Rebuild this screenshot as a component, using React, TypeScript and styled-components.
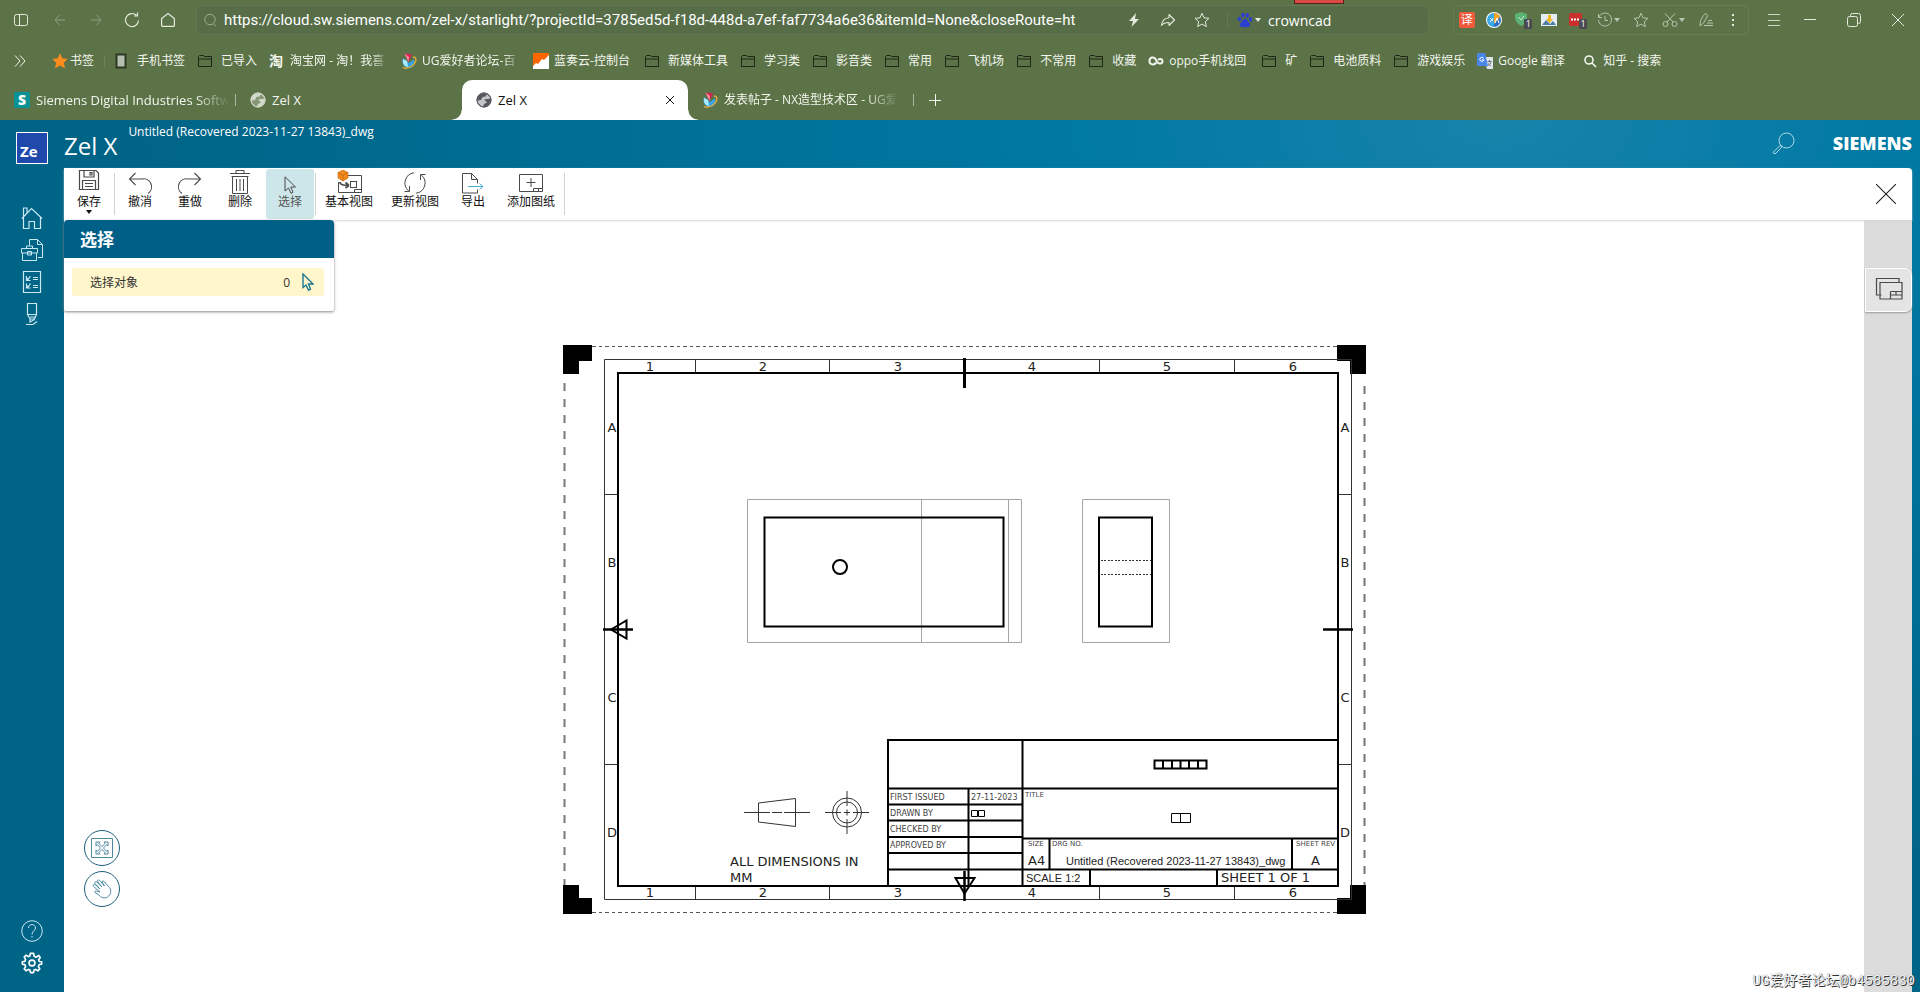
import React from 'react';
import styled, { createGlobalStyle, css } from 'styled-components';

const GlobalStyle = createGlobalStyle`
  *, *::before, *::after { box-sizing: border-box; }
  body {
    margin: 0;
    font-family: 'Open Sans', 'Noto Sans CJK SC', sans-serif;
    font-size: 12px;
  }
  button, input { font: inherit; }
  button { border: 0; padding: 0; background: none; color: inherit; cursor: pointer; }
  svg { display: block; flex: none; }
  a { color: inherit; text-decoration: none; }
`;

/* ---------- shared icon wrapper ---------- */

type IconProps = { w?: number; h?: number; sw?: number; box?: string; children: React.ReactNode };
const Icon = ({ w = 16, h = w, sw = 1, box, children }: IconProps) => (
  <svg width={w} height={h} viewBox={box ?? `0 0 ${w} ${h}`} fill="none" stroke="currentColor" strokeWidth={sw} aria-hidden="true">
    {children}
  </svg>
);

const starPath = 'M8 1.2 10 5.8 15 6.3 11.3 9.7 12.4 14.6 8 12.1 3.6 14.6 4.7 9.7 1 6.3 6 5.8Z';

const GlobeIcon = () => (
  <Icon>
    <circle cx="8" cy="8" r="7" fill="currentColor" fillOpacity=".35" />
    <path d="M3 3.500C5 1.500 9 1 11 2L9.500 4.500 6.500 5 5 8 2 8.500 1.300 6Z M8 7.500 14.500 6.500C15.500 11 11 15.500 7 14.800L8 12 11 10.500Z" fill="currentColor" stroke="none" />
    <circle cx="8" cy="8" r="7" />
  </Icon>
);

const ForumIcon = () => (
  <Icon>
    <path d="M2 5C0 11 4 15 8 15S14 12 13 6L8 10Z" fill="#35a5e6" stroke="none" />
    <path d="M2 6C1 12 5 14 7 14L6 8Z" fill="#a9ecff" stroke="none" />
    <path d="M3.500 .5 11 1.500 7.500 9Z" fill="#d4234d" stroke="none" />
    <path d="M3.500 .5 8 4 7.500 9Z" fill="#ff8ba5" stroke="none" />
    <path d="M12 4C16 4 16 9 11 13 7 15.500 3 16 2 14" stroke="#e0ac3c" strokeWidth="1.4" />
  </Icon>
);

const FolderIcon = () => (
  <Icon>
    <path d="M1.500 3.500 2.500 2.500H6.500L7.500 3.500H14.500V13.500H1.500ZM1.500 6H14.500" stroke="#1d2617" />
  </Icon>
);

/* ---------- browser chrome ---------- */

const Chrome = styled.header`
  background: #5c7348;
  color: #f3f6ee;
  overflow: hidden;
`;

const AddressRow = styled.div`
  position: relative;
  display: flex;
  align-items: center;
  height: 40px;
`;

const NavButton = styled.button<{ $dim?: boolean; $width?: number }>`
  display: flex;
  align-items: center;
  justify-content: center;
  width: ${(p) => p.$width ?? 36}px;
  height: 30px;
  color: ${(p) => (p.$dim ? '#8d9f7e' : '#e4eadd')};
`;

const AddressField = styled.div`
  display: flex;
  align-items: center;
  flex: 1;
  height: 30px;
  margin-left: 10px;
  padding-left: 5px;
  border: 1px solid #637a50;
  border-radius: 6px;
  background: #566d47;
`;

const UrlInput = styled.input`
  flex: 1;
  min-width: 0;
  margin-left: 6px;
  padding: 0;
  border: 0;
  outline: 0;
  background: none;
  color: #fff;
  font-family: Roboto, 'Noto Sans CJK SC', sans-serif;
  font-size: 15px;
`;

const SearchInput = styled(UrlInput)`
  flex: none;
  width: 160px;
  margin-left: 2px;
  font-family: 'Open Sans', 'Noto Sans CJK SC', sans-serif;
  font-size: 14px;
`;

const FieldIcon = styled.span`
  display: flex;
  align-items: center;
  justify-content: center;
  width: 16px;
`;

const FieldButton = styled.button`
  display: flex;
  align-items: center;
  justify-content: center;
  gap: 2px;
  width: 34px;
  height: 28px;
  color: #e4eadd;
`;

const FieldDivider = styled.span`
  width: 1px;
  height: 16px;
  margin: 0 4px 0 8px;
  background: #647a54;
`;

const RecordMark = styled.span`
  position: absolute;
  top: 0;
  left: 1294px;
  width: 50px;
  height: 4px;
  border: 1px solid #5a1f1c;
  border-top: 0;
  background: #d84a44;
`;

const ExtensionBox = styled.div`
  display: flex;
  align-items: center;
  width: 296px;
  height: 30px;
  margin-left: 24px;
  border: 1px solid #687f55;
  border-radius: 6px;
  color: #b9c5ad;
`;

const ExtensionButton = styled.button<{ $width?: number }>`
  position: relative;
  display: flex;
  align-items: center;
  justify-content: center;
  gap: 1px;
  width: ${(p) => p.$width ?? 28}px;
  height: 28px;
  padding-right: 2px;
`;

const TranslateChip = styled.span`
  width: 16px;
  height: 16px;
  border-radius: 2px;
  background: #ef5a3d;
  color: #fff;
  font-size: 12px;
  line-height: 16px;
`;

const CountBadge = styled.span`
  position: absolute;
  right: 4px;
  bottom: 5px;
  width: 8px;
  height: 10px;
  border-radius: 1px;
  background: #4a4a50;
  color: #fff;
  font-size: 9px;
  line-height: 10px;
`;

const WindowControls = styled.div`
  display: flex;
  padding-left: 11px;
`;

const BookmarkRow = styled.nav`
  display: flex;
  align-items: center;
  gap: 12px;
  height: 40px;
  padding: 1px 0 0 10px;
  white-space: nowrap;
`;

const MoreBookmarks = styled.button`
  display: flex;
  justify-content: center;
  width: 20px;
  margin-right: 10px;
`;

const RowDivider = styled.span`
  width: 1px;
  height: 12px;
  margin: 0 -4px 0 -2px;
  background: #6f8360;
`;

const fade = css`
  -webkit-mask-image: linear-gradient(to right, #000 82%, transparent);
  mask-image: linear-gradient(to right, #000 82%, transparent);
`;

const BookmarkLink = styled.a<{ $gap?: number }>`
  display: flex;
  align-items: center;
  flex: none;
  gap: ${(p) => p.$gap ?? 8}px;
`;

const BookmarkText = styled.span<{ $width?: number; $fade?: boolean }>`
  width: ${(p) => (p.$width ? `${p.$width}px` : 'auto')};
  line-height: 20px;
  ${(p) => p.$fade && fade}
`;

const TaobaoGlyph = styled.span`
  width: 16px;
  font-size: 14px;
  font-weight: 700;
  line-height: 16px;
`;

const TabRow = styled.div`
  display: flex;
  height: 40px;
  padding-left: 10px;
`;

const Tab = styled.div<{ $active?: boolean; $divided?: boolean; $indent?: boolean }>`
  position: relative;
  display: flex;
  align-items: center;
  width: 226px;
  height: 40px;
  padding: 0 ${(p) => (p.$active ? 10 : 12)}px 0 ${(p) => (p.$active || p.$indent ? 14 : 4)}px;
  ${(p) => p.$divided && css`
    &::after {
      content: '';
      position: absolute;
      right: 0;
      top: 14px;
      width: 1px;
      height: 12px;
      background: #a9b79c;
    }
  `}
  ${(p) => p.$active && css`
    background: #fff;
    color: #111;
    border-radius: 10px 10px 0 0;
    &::before, &::after {
      content: '';
      position: absolute;
      bottom: 0;
      width: 10px;
      height: 10px;
    }
    &::before { left: -10px; background: radial-gradient(circle at 0 0, transparent 9px, #fff 10px); }
    &::after { right: -10px; background: radial-gradient(circle at 100% 0, transparent 9px, #fff 10px); }
  `}
`;

const TabMain = styled.button<{ $dark?: boolean; $small?: boolean }>`
  display: flex;
  align-items: center;
  gap: 6px;
  flex: 1;
  min-width: 0;
  font-size: ${(p) => (p.$small ? 12 : 13)}px;
  line-height: 20px;
  text-align: left;
  white-space: nowrap;
  svg { color: ${(p) => (p.$dark ? '#55585c' : '#d3dacb')}; }
`;

const TabText = styled.span<{ $fade?: boolean }>`
  ${(p) => p.$fade && fade}
`;

const TabAction = styled.button`
  display: flex;
  align-items: center;
  justify-content: center;
  width: 16px;
`;

const NewTab = styled(TabAction)`
  width: 42px;
`;

const SiteLogo = styled.span`
  flex: none;
  width: 16px;
  height: 16px;
  background: #0a9396;
  color: #fff;
  font-size: 14px;
  font-weight: 800;
  line-height: 16px;
  text-align: center;
`;

type Bookmark = { text: string; icon?: React.ReactNode; width?: number; fade?: boolean; gap?: number };

const bookmarks: Bookmark[] = [
  { text: '手机书签', icon: <Icon><rect x="3.500" y="1.500" width="9" height="13" fill="#b4bfae" stroke="#2c3825" strokeWidth="2" /></Icon> },
  { text: '已导入' },
  { text: '淘宝网 - 淘！我喜', icon: <TaobaoGlyph>淘</TaobaoGlyph>, width: 99, fade: true, gap: 5 },
  { text: 'UG爱好者论坛-百', icon: <ForumIcon />, width: 99, fade: true, gap: 5 },
  {
    text: '蓝奏云-控制台', width: 78, gap: 5,
    icon: <Icon><path d="M0 0H16V16H0Z" fill="#fff" stroke="none" /><path d="M0 0H16V2L11 7 9 6 5 11 3 10 0 13Z" fill="#f60" stroke="none" /></Icon>,
  },
  { text: '新媒体工具' }, { text: '学习类' }, { text: '影音类' }, { text: '常用' },
  { text: '飞机场' }, { text: '不常用' }, { text: '收藏' },
  {
    text: 'oppo手机找回', width: 80, gap: 5,
    icon: <Icon sw={2}><path d="M8 9.500C6.500 12.500 1.500 12 1.500 8S6 3.500 7.500 6L9 8.800C10.500 11.500 14.500 11 14.500 8.300S11.500 5.500 10 7" /></Icon>,
  },
  { text: '矿' }, { text: '电池质料' }, { text: '游戏娱乐' },
  {
    text: 'Google 翻译', width: 72, gap: 5,
    icon: (
      <Icon>
        <path d="M7 4H16V16H10Z" fill="#dfe3ea" stroke="none" />
        <path d="M10.500 8.500H14.500M12.500 7V8.500M14 8.500C13.500 11 12 12 10.500 13M11 10.500 14 13" stroke="#6b7280" />
        <path d="M0 0H8L11 13H0Z" fill="#4a86e8" stroke="none" />
        <path d="M6.500 5.200A2 2 0 1 0 6.800 6.800H5" stroke="#fff" />
      </Icon>
    ),
  },
  { text: '知乎 - 搜索', gap: 5, icon: <Icon sw={1.6}><circle cx="7" cy="7" r="4" /><path d="m10 10 4 4" /></Icon> },
];

const Caret = () => <Icon w={6} h={4}><path d="M0 0H6L3 4Z" fill="currentColor" stroke="none" /></Icon>;

const BrowserChrome = () => (
  <Chrome>
    <AddressRow>
      <NavButton aria-label="侧栏" $width={42}><Icon><rect x="1.500" y="2.500" width="13" height="11" rx="2" /><path d="M6.500 2.500V13.500" /></Icon></NavButton>
      <NavButton aria-label="后退" $dim><Icon><path d="M13 8H3M8 2.500 3 8 8 13.500" /></Icon></NavButton>
      <NavButton aria-label="前进" $dim><Icon><path d="M3 8H13M8 2.500 13 8 8 13.500" /></Icon></NavButton>
      <NavButton aria-label="刷新"><Icon sw={1.2}><path d="M14.500 8.500A6.500 6.500 0 1 1 12.500 3.300M13.500.5V4H10" /></Icon></NavButton>
      <NavButton aria-label="主页"><Icon sw={1.2}><path d="M1.600 6.500 8 1.500 14.400 6.500V13.400A1 1 0 0 1 13.400 14.400H2.600A1 1 0 0 1 1.600 13.400Z" /></Icon></NavButton>
      <AddressField>
        <FieldIcon><Icon w={14}><circle cx="7" cy="6.500" r="5.200" stroke="#9fae92" /><path d="m10.500 11 2.500 2.500" stroke="#9fae92" /></Icon></FieldIcon>
        <UrlInput
          aria-label="地址"
          readOnly
          value="https://cloud.sw.siemens.com/zel-x/starlight/?projectId=3785ed5d-f18d-448d-a7ef-faf7734a6e36&itemId=None&closeRoute=ht"
        />
        <FieldButton aria-label="极速"><Icon><path d="M10 1 3 9H7L5.500 15 13 7H9Z" fill="currentColor" stroke="none" /></Icon></FieldButton>
        <FieldButton aria-label="分享"><Icon sw={1.1}><path d="M9 2.500 14.500 8 9 13.500V10.500C5 10.500 3 11.500 1.500 13.500 2 9 4.500 6 9 5.700Z" strokeLinejoin="round" /></Icon></FieldButton>
        <FieldButton aria-label="收藏"><Icon><path d={starPath} strokeLinejoin="round" /></Icon></FieldButton>
        <FieldDivider />
        <FieldButton aria-label="搜索引擎">
          <Icon>
            <g fill="#2b3fd0" stroke="none">
              <ellipse cx="2.500" cy="7" rx="1.800" ry="2.300" /><ellipse cx="6" cy="3.200" rx="1.700" ry="2.400" />
              <ellipse cx="10.300" cy="3.400" rx="1.700" ry="2.400" /><ellipse cx="13.600" cy="7.400" rx="1.700" ry="2.300" />
              <path d="M8 7C5.500 7 5.500 9.500 3.500 11 1.500 13 3 16 8 15 13 16 14.500 13 12.500 11 10.500 9.500 10.500 7 8 7Z" />
            </g>
          </Icon>
          <Caret />
        </FieldButton>
        <SearchInput aria-label="搜索" readOnly value="crowncad" />
      </AddressField>
      <RecordMark />
      <ExtensionBox>
        <ExtensionButton aria-label="翻译扩展"><TranslateChip>译</TranslateChip></ExtensionButton>
        <ExtensionButton aria-label="词典">
          <Icon>
            <circle cx="8" cy="8" r="8" fill="#fff" stroke="none" />
            <path d="M8 1A7 7 0 0 0 8 15Z" fill="#3aa7e8" stroke="none" /><path d="M8 1A7 7 0 0 1 8 15Z" fill="#2c6fc4" stroke="none" />
            <path d="M8 1A7 7 0 0 1 14 5L8 12Z" fill="#f5a524" stroke="none" />
            <path d="M4 6 7 9M7 6 4 10M9 11 11 6 13 11" stroke="#fff" />
          </Icon>
        </ExtensionButton>
        <ExtensionButton aria-label="防护">
          <Icon><path d="M1 2 7 0 13 2V7C13 11 10 13 7 14 4 12 1 9 1 6Z" fill="#5cb274" stroke="none" /><path d="M4.500 5 7 8 10 4" stroke="#d5f0db" /></Icon>
          <CountBadge>1</CountBadge>
        </ExtensionButton>
        <ExtensionButton aria-label="图片下载">
          <Icon><rect x="0" y="2" width="16" height="12" fill="#e6eef5" stroke="none" /><path d="M1 13 5 8 9 12 12 9 15 13Z" fill="#4f7ea8" stroke="none" /><path d="M7 3H10V7H12L8.500 11 5 7H7Z" fill="#f0b41c" stroke="none" /></Icon>
        </ExtensionButton>
        <ExtensionButton aria-label="密码">
          <Icon><rect x="1" y="1" width="13" height="13" rx="2" fill="#c9302c" stroke="none" /><path d="M3 7.500H12" stroke="#fff" strokeWidth="2" strokeDasharray="2 1" /></Icon>
          <CountBadge>1</CountBadge>
        </ExtensionButton>
        <ExtensionButton aria-label="历史" $width={38}><Icon><path d="M2 5A6.500 6.500 0 1 1 1.500 8M1.500 2V5.500H5M8 4V8.500H11" /></Icon><Caret /></ExtensionButton>
        <ExtensionButton aria-label="收藏夹"><Icon><path d={starPath} strokeLinejoin="round" /></Icon></ExtensionButton>
        <ExtensionButton aria-label="截图" $width={38}><Icon><circle cx="3.500" cy="12" r="2.500" /><circle cx="12.500" cy="12" r="2.500" /><path d="M5 10 13 1.500M11 10 3 1.500" /></Icon><Caret /></ExtensionButton>
        <ExtensionButton aria-label="笔记"><Icon><path d="M2 12.500C2 9 5 3 7 2 9 1.500 10 3 9 5L5.500 11 2 14ZM10 8.500H14M9 11H15M6 13.500H15" /></Icon></ExtensionButton>
        <ExtensionButton aria-label="更多"><Icon><path d="M8 2V4M8 7V9M8 12V14" stroke="#e4eadd" strokeWidth="2" /></Icon></ExtensionButton>
      </ExtensionBox>
      <WindowControls>
        <NavButton aria-label="菜单" $width={28}><Icon><path d="M2 2.500H14M2 8.500H14M2 13.500H14" stroke="#ccd5c4" /></Icon></NavButton>
        <NavButton aria-label="最小化" $width={44}><Icon><path d="M2 7.500H14" /></Icon></NavButton>
        <NavButton aria-label="还原" $width={44}><Icon><rect x="1.500" y="4.500" width="10" height="10" rx="2" /><path d="M4.500 4.500V3.500A2 2 0 0 1 6.500 1.500H12.500A2 2 0 0 1 14.500 3.500V9.500A2 2 0 0 1 12.500 11.500H11.500" /></Icon></NavButton>
        <NavButton aria-label="关闭窗口" $width={44}><Icon><path d="M2 2 14 14M14 2 2 14" /></Icon></NavButton>
      </WindowControls>
    </AddressRow>

    <BookmarkRow>
      <MoreBookmarks aria-label="更多书签"><Icon><path d="M3 2.500 8 8 3 13.500M8 2.500 13 8 8 13.500" /></Icon></MoreBookmarks>
      <BookmarkLink href="#" $gap={2}>
        <Icon><path d={starPath} fill="#fb8c1e" stroke="#fb8c1e" strokeLinejoin="round" /></Icon>
        <BookmarkText>书签</BookmarkText>
      </BookmarkLink>
      <RowDivider />
      {bookmarks.map((b) => (
        <BookmarkLink href="#" key={b.text} $gap={b.gap}>
          {b.icon ?? <FolderIcon />}
          <BookmarkText $width={b.width} $fade={b.fade}>{b.text}</BookmarkText>
        </BookmarkLink>
      ))}
    </BookmarkRow>

    <TabRow>
      <Tab $divided>
        <TabMain><SiteLogo>S</SiteLogo><TabText $fade>Siemens Digital Industries Softw</TabText></TabMain>
      </Tab>
      <Tab $indent>
        <TabMain><GlobeIcon /><TabText>Zel X</TabText></TabMain>
      </Tab>
      <Tab $active>
        <TabMain $dark><GlobeIcon /><TabText>Zel X</TabText></TabMain>
        <TabAction aria-label="关闭标签"><Icon w={10}><path d="m1 1 8 8M9 1 1 9" /></Icon></TabAction>
      </Tab>
      <Tab $divided $indent>
        <TabMain $small><ForumIcon /><TabText $fade>发表帖子 - NX造型技术区 - UG爱</TabText></TabMain>
      </Tab>
      <NewTab aria-label="新标签页"><Icon w={12}><path d="M6.500 0V12M0 6.500H12" /></Icon></NewTab>
    </TabRow>
  </Chrome>
);

/* ---------- application frame ---------- */

const Page = styled.div`
  display: flex;
  flex-direction: column;
  min-height: 100vh;
  position: relative;
`;

const AppFrame = styled.div`
  display: flex;
  flex: 1;
  padding-right: 8px;
  background: radial-gradient(ellipse 72% 90% at 78% 0, #1783ab 0%, #0079a3 30%, #006487 100%);
`;

const Sidebar = styled.nav`
  display: flex;
  flex-direction: column;
  align-items: center;
  width: 64px;
  padding: 12px 0 13px;
  color: #c9e8f2;
`;

const SideButton = styled.button`
  display: flex;
  align-items: center;
  justify-content: center;
  width: 32px;
  height: 32px;
`;

const AppLogo = styled.span`
  display: flex;
  align-items: flex-end;
  width: 32px;
  height: 32px;
  margin-bottom: 38px;
  padding: 0 0 2px 3px;
  border: 1px solid #fff;
  background: #1f49ab;
  color: #fff;
  font-size: 15px;
  font-weight: 700;
  line-height: 20px;
`;

const SideSpacer = styled.span`
  flex: 1;
`;

const Main = styled.main`
  display: flex;
  flex-direction: column;
  flex: 1;
  min-width: 0;
`;

const TitleBar = styled.div`
  display: flex;
  height: 48px;
  color: #fff;
`;

const AppName = styled.h1`
  margin: 8px 11px 0 0;
  font-size: 24px;
  font-weight: 400;
  line-height: 36px;
`;

const DocumentName = styled.span`
  flex: 1;
  margin-top: 3px;
  font-size: 12px;
  line-height: 18px;
`;

const SearchButton = styled.button`
  align-self: flex-start;
  margin: 12px 38px 0 0;
  color: #b5dcea;
`;

const Brand = styled.span`
  margin-top: 11px;
  font-size: 18px;
  font-weight: 800;
  line-height: 24px;
`;

const Toolbar = styled.div`
  position: relative;
  z-index: 1;
  display: flex;
  align-items: flex-start;
  height: 52px;
  border-top-right-radius: 4px;
  background: #fff;
  box-shadow: 0 1px 2px #d5d5d5;
  color: #111;
`;

const ToolButton = styled.button<{ $wide?: boolean; $active?: boolean }>`
  display: flex;
  flex-direction: column;
  align-items: center;
  width: ${(p) => (p.$wide ? 64 : 48)}px;
  height: 50px;
  margin: 1px 1px 0;
  border-radius: 3px;
  line-height: 16px;
  white-space: nowrap;
  background: ${(p) => (p.$active ? '#cde6ea' : 'none')};
  color: ${(p) => (p.$active ? '#555' : 'inherit')};
`;

const ToolGlyph = styled.span<{ $raised?: boolean }>`
  display: flex;
  align-items: flex-end;
  height: 25px;
  padding-bottom: ${(p) => (p.$raised ? 3 : 0)}px;
  color: #4a4a4a;
`;

const ToolDivider = styled.span`
  width: 1px;
  height: 42px;
  margin-top: 5px;
  background: #d2d2d2;
`;

const CloseButton = styled.button`
  margin: 16px 16px 0 auto;
  color: #222;
`;

const Workspace = styled.div`
  display: flex;
  flex: 1;
`;

const Canvas = styled.section`
  position: relative;
  display: flex;
  justify-content: center;
  flex: 1;
  min-width: 0;
  padding: 125px 0 78px;
  background: #fff;
`;

const RightRail = styled.aside`
  width: 48px;
  padding: 48px 0 0 1px;
  background: #dcdcdc;
`;

const RailTab = styled.button`
  display: flex;
  align-items: center;
  justify-content: center;
  width: 47px;
  height: 44px;
  padding-bottom: 3px;
  border: 1px solid #fff;
  border-radius: 0 7px 7px 0;
  background: #e4e4e4;
  box-shadow: 0 1px 2px #999;
  color: #4a4a4a;
`;

const SelectPanel = styled.section`
  position: absolute;
  top: 0;
  left: 0;
  z-index: 2;
  width: 270px;
  padding-bottom: 15px;
  border-radius: 4px 4px 2px 2px;
  background: #fff;
  box-shadow: 0 1px 3px #888;
`;

const PanelTitle = styled.h2`
  margin: 0;
  padding: 1px 16px 0;
  border-radius: 4px 4px 0 0;
  background: #005f87;
  color: #fff;
  font-size: 17px;
  font-weight: 700;
  line-height: 37px;
`;

const SelectRow = styled.button`
  display: flex;
  align-items: center;
  width: 252px;
  height: 28px;
  margin: 10px 8px 0;
  padding: 0 10px 0 18px;
  border-radius: 3px;
  background: #fff6cb;
  color: #333;
`;

const SelectCount = styled.span`
  margin: 0 12px 0 auto;
`;

const ViewControls = styled.div`
  position: absolute;
  bottom: 85px;
  left: 20px;
  display: flex;
  flex-direction: column;
  gap: 5px;
`;

const RoundButton = styled.button`
  display: flex;
  align-items: center;
  justify-content: center;
  width: 36px;
  height: 36px;
  border: 1px solid #1d5f7c;
  border-radius: 50%;
  background: #fff;
  color: #4f8aa2;
`;

const ForumMark = styled.span`
  position: absolute;
  right: 5px;
  bottom: 1px;
  z-index: 3;
  color: #f4f4f4;
  font-family: 'Liberation Mono', 'Noto Sans CJK SC', monospace;
  font-size: 14px;
  line-height: 20px;
  text-shadow: 1px 1px 0 #333, 0 0 1px #777;
`;

/* ---------- toolbar data ---------- */

const tools = {
  save: <Icon w={22} sw={1.2}><path d="M1.500 1.500H18L20.500 4V20.500H1.500Z" /><path d="M6 1.500V8H16V1.500M12 3.500H14V6H12ZM4.500 20V11.500H17.500V20M7 14.500H15M7 17.500H15" /></Icon>,
  undo: <Icon w={24} h={22} sw={1.1}><path d="M7.500 1 1.500 7 7.500 13M1.500 7H14A8 8 0 0 1 20 21.500" /></Icon>,
  redo: <Icon w={24} h={22} sw={1.1}><path d="M16.500 1 22.500 7 16.500 13M22.500 7H10A8 8 0 0 0 4 21.500" /></Icon>,
  trash: <Icon w={22} h={24}><path d="M1 3.500H21M7 3.500V.5H15V3.500M2.500 6.500H19.500M3.500 6.500V23.500H18.500V6.500M7.500 9V21M11 9V21M14.500 9V21" /></Icon>,
  select: <Icon w={14} h={18}><path d="M2 .8V15L5.500 12 8 17.300 10 16.300 7.800 11H12.500Z" /></Icon>,
  base: (
    <Icon w={26} h={24}>
      <path d="M2.500 12V22.500H25.500V5.500H12" /><rect x="14.500" y="11.500" width="6" height="6" /><path d="M18.500 22V19.500H25" />
      <path d="M4 12C4 15 8 15.500 12 15.500M13 15.500 9.500 12.500M13 15.500 9.500 18" strokeWidth="1.800" />
      <path d="M7 0 12 2.500V8L7 11 2 8V2.500Z" fill="#f08a1c" stroke="#c8650a" strokeWidth=".6" /><path d="M2 2.500 7 5.500 12 2.500M7 5.500V11" stroke="#b85a06" strokeWidth=".6" />
    </Icon>
  ),
  refresh: <Icon w={24} h={22}><path d="M11 .8A10.300 10.300 0 0 0 5.500 18.800M6.500 14V19.500H1.500M13 21.200A10.300 10.300 0 0 0 18.500 3.200M17.500 8V2.500H22.500" /></Icon>,
  export: <Icon w={24} h={22}><path d="M16.500 11.500V7.500L10.500 1.500H1.500V21H16.500V17.500M10.500 1.500V7.500H16.500" /><path d="M7 14.500H22M18.500 11.500 22 14.500 18.500 17.500" stroke="#4aabc9" /></Icon>,
  sheet: <Icon w={26} h={22}><path d="M1.500 2.500H24.500V19.500H1.500Z" /><path d="M8.500 10.500H17.500M13 6V15M15.500 19V16.500H24M20.500 16.500V19" /></Icon>,
};

type ToolProps = { icon: React.ReactNode; label: string; wide?: boolean; active?: boolean; menu?: boolean };
const Tool = ({ icon, label, wide, active, menu }: ToolProps) => (
  <ToolButton $wide={wide} $active={active}>
    <ToolGlyph $raised={menu}>{icon}</ToolGlyph>
    <span>{label}</span>
    {menu && <Caret />}
  </ToolButton>
);

/* ---------- drawing sheet ---------- */

const Sheet = styled.svg`
  font-family: 'DejaVu Sans', sans-serif;
  fill: none;
  stroke: #000;
  text { fill: #222; stroke: none; font-size: 13px; }
  text.small { font-size: 8px; fill: #444; }
  text.caption { font-size: 7px; fill: #444; }
  text.file { font-family: 'Liberation Sans', sans-serif; font-size: 11px; }
`;

const columns: [string, number][] = [['1', 650], ['2', 763], ['3', 898], ['4', 1032], ['5', 1167], ['6', 1293]];
const rows: [string, number][] = [['A', 432], ['B', 567], ['C', 702], ['D', 837]];
const approvals = ['FIRST ISSUED', 'DRAWN BY', 'CHECKED BY', 'APPROVED BY'];

const DrawingSheet = () => (
  <Sheet width="804" height="569" viewBox="562 345 804 569" role="img" aria-label="图纸">
    <g stroke="#555">
      <path d="M592 346.500H1337M592 912.500H1337" strokeDasharray="4 3 3 3" />
      <path d="M564.500 383V885M1364.500 386V885" strokeWidth="2" stroke="#777" strokeDasharray="8 8" />
    </g>
    <path
      fill="#000" stroke="none"
      d="M563 345H592V361H579V374H563ZM1337 345H1366V374H1350V361H1337ZM563 885H579V898H592V914H563ZM1350 885H1366V914H1337V898H1350Z"
    />
    <path stroke="#333" d="M604.500 359.500H1351.500V899.500H604.500Z M695.500 360V373M829.500 360V373M1099.500 360V373M1234.500 360V373M695.500 886V899M829.500 886V899M1099.500 886V899M1234.500 886V899M605 494.500H618M605 764.500H618M1338 494.500H1351M1338 764.500H1351" />
    <rect x="618" y="373" width="720" height="513" strokeWidth="2" />
    <g strokeWidth="2.500">
      <path strokeWidth="3" d="M964.500 358V388" />
      <path d="M603 629.500H633M1323 629.500H1353M964.500 871V901" />
      <path strokeWidth="2" d="M611 629.500 626.500 620.500V638.500ZM955.500 878H974.500L964.500 893.500Z" />
    </g>
    {columns.map(([label, x]) => (
      <g key={label} textAnchor="middle"><text x={x} y="371">{label}</text><text x={x} y="897">{label}</text></g>
    ))}
    {rows.map(([label, y]) => (
      <g key={label} textAnchor="middle"><text x="612" y={y}>{label}</text><text x="1345" y={y}>{label}</text></g>
    ))}

    <path stroke="#a5a5a5" d="M747.500 499.500H1021.500V642.500H747.500ZM921.500 500V642M1008.500 500V642M1082.500 499.500H1169.500V642.500H1082.500Z" />
    <path strokeWidth="2" d="M764.500 517.500H1003.500V626.500H764.500ZM1099 517.500H1152V626.500H1099Z" />
    <circle cx="840" cy="567" r="7" strokeWidth="2" />
    <path stroke="#333" strokeDasharray="2 1 2 2" d="M1101 560.500H1151M1101 574.500H1151" />

    <g stroke="#333">
      <path d="M758.500 803 795.500 798.500V826.500L758.500 822ZM744 812.500H770M772 812.500H782M784 812.500H810" />
      <circle cx="847" cy="812.500" r="14.500" /><circle cx="847" cy="812.500" r="10.500" />
      <path d="M825 812.500H841M844 812.500H850M853 812.500H869M847 791V806M847 809.500V815.500M847 819V834" />
    </g>
    <text x="730" y="866">ALL DIMENSIONS IN</text>
    <text x="730" y="882">MM</text>

    <path strokeWidth="2" d="M888 886V740H1338M888 788.500H1338M1022.500 740V886M968.500 788V886M888 804.500H1022M888 820.500H1022M888 837H1022M888 853H1022M888 869.500H1338M1022 838.500H1338M1049.500 838V869M1292 838V869M1090 869V886M1217 869V886" />
    {approvals.map((label, i) => <text className="small" key={label} x="890" y={800 + i * 16}>{label}</text>)}
    <text className="small" x="971" y="800">27-11-2023</text>
    <path d="M971.500 810.500H977.500V816.500H971.500ZM978.500 810.500H984.500V816.500H978.500ZM1171.500 813.500H1180.500V822.500H1171.500ZM1180.500 813.500H1190.500V822.500H1180.500Z" />
    <path strokeWidth="2" d="M1154.500 760.500H1206.500V768.500H1154.500ZM1163 760V769M1172 760V769M1180.500 760V769M1189 760V769M1198 760V769" />
    <text className="caption" x="1025" y="797">TITLE</text>
    <text className="caption" x="1028" y="846">SIZE</text>
    <text className="caption" x="1052" y="846">DRG NO.</text>
    <text className="caption" x="1296" y="846">SHEET REV</text>
    <text x="1028" y="865">A4</text>
    <text className="file" x="1066" y="865">Untitled (Recovered 2023-11-27 13843)_dwg</text>
    <text x="1311" y="865">A</text>
    <text className="file" x="1026" y="882">SCALE 1:2</text>
    <text x="1221" y="882">SHEET 1 OF 1</text>
  </Sheet>
);

/* ---------- page ---------- */

export default function App() {
  return (
    <Page>
      <GlobalStyle />
      <BrowserChrome />
      <AppFrame>
        <Sidebar>
          <AppLogo>Ze</AppLogo>
          <SideButton aria-label="主页"><Icon w={22} sw={1.2}><path d="M.8 11.500 10.500 1.500 21 11.500M2.500 10V21.500H8V14.500H13.500V21.500H19.500V10M2.500 9V1H6V5.500" /></Icon></SideButton>
          <SideButton aria-label="项目"><Icon w={22}><path d="M.5 9.500H16.500V14H.5ZM1.500 14V21.500H15.500V14M5.500 9.500V7H11.500V9.500M6.500 12.500H10.500V16H6.500ZM8.500 6.500V.5H16.500L21.500 5.500V18.500H17M16.500.5V5.500H21.500" /></Icon></SideButton>
          <SideButton aria-label="任务"><Icon w={20} h={22} sw={1.2}><path d="M1.500.5H18.500V21.500H1.500Z" /><path d="M8.500 5 6 8.500 4.500 7M4.500 5V9.500H8.500M8.500 12.500 6 16 4.500 14.500M4.500 12.500V17H8.500M11 6.500H16M11 8.500H16M11 14.500H16M11 16.500H16" /></Icon></SideButton>
          <SideButton aria-label="标记"><Icon w={14} h={22} sw={1.2}><path d="M2.500.5H11.500V11.500H2.500ZM2.500 11.500 5 16H9.500L11.500 11.500M5 14H10M5 16V19L9.500 16.500M1 21.500H8L12 18.500" /></Icon></SideButton>
          <SideSpacer />
          <SideButton aria-label="帮助"><Icon w={22}><circle cx="11" cy="11" r="10.300" /><path d="M7.500 8C7.500 3.500 14.500 3.500 14.500 8 14.500 11 11 10.500 11 14.500M11 16V17.500" /></Icon></SideButton>
          <SideButton aria-label="设置">
            <Icon w={22} box="0 0 24 24" sw={1.800}>
              <path stroke="#fff" strokeLinejoin="round" d="M10.200 1.500H13.800L14.300 4.600 16.700 5.600 19.300 3.800 21 6 19.200 8.400 19.900 10.300 22.500 10.700V13.300L19.900 13.700 19 16 20.500 18.500 18.400 20.500 16 19 14.200 19.700 13.600 22.500H10.400L9.800 19.700 8 19 5.500 20.500 3.500 18.400 5 16 4.200 13.800 1.500 13.300V10.700L4.200 10.200 5 8 3.500 5.600 5.600 3.500 8 5 9.700 4.300Z" />
              <circle cx="12" cy="12" r="3.200" stroke="#fff" />
            </Icon>
          </SideButton>
        </Sidebar>

        <Main>
          <TitleBar>
            <AppName>Zel X</AppName>
            <DocumentName>Untitled (Recovered 2023-11-27 13843)_dwg</DocumentName>
            <SearchButton aria-label="搜索"><Icon w={24}><circle cx="15.500" cy="8.500" r="7.500" /><path d="M10 14 9 13.500 2 20.500 4 22 10.500 15.500Z" /></Icon></SearchButton>
            <Brand>SIEMENS</Brand>
          </TitleBar>

          <Toolbar>
            <Tool icon={tools.save} label="保存" menu />
            <ToolDivider />
            <Tool icon={tools.undo} label="撤消" />
            <Tool icon={tools.redo} label="重做" />
            <Tool icon={tools.trash} label="删除" />
            <Tool icon={tools.select} label="选择" active />
            <ToolDivider />
            <Tool icon={tools.base} label="基本视图" wide />
            <Tool icon={tools.refresh} label="更新视图" wide />
            <Tool icon={tools.export} label="导出" />
            <Tool icon={tools.sheet} label="添加图纸" wide />
            <ToolDivider />
            <CloseButton aria-label="关闭"><Icon w={20} sw={1.1}><path d="M0 0 20 20M20 0 0 20" /></Icon></CloseButton>
          </Toolbar>

          <Workspace>
            <Canvas>
              <DrawingSheet />
              <SelectPanel>
                <PanelTitle>选择</PanelTitle>
                <SelectRow>
                  选择对象
                  <SelectCount>0</SelectCount>
                  <Icon w={12} h={18} sw={1.400}><path stroke="#1b7795" d="M1 1V14.500L4 12 6.500 17.200 8.500 16.200 6.500 11H11Z" /></Icon>
                </SelectRow>
              </SelectPanel>
              <ViewControls>
                <RoundButton aria-label="适合窗口">
                  <Icon w={22} h={20}><path d="M.5.500H21.500V19.500H.500Z" /><path d="M5 4H9L7.800 5.500 11 8.500 14.200 5.500 13 4H17V8L15.500 6.800 12.500 10 15.500 13.200 17 12V16H13L14.200 14.500 11 11.500 7.800 14.500 9 16H5V12L6.500 13.200 9.500 10 6.500 6.800 5 8Z" /></Icon>
                </RoundButton>
                <RoundButton aria-label="平移">
                  <Icon w={20}><path strokeLinejoin="round" d="M8 10 3 4.500C2 3 4 2 5 3.200L10 8 5.500 2.500C5 1 7 .5 8 1.800L12.500 7 10 3C10 1.500 11.500 1.500 12.500 3L17.500 8.500C20 12 18.500 16 15.500 18 12 20 9 18.500 7.500 16.500L3 13.500C2 12 4 11.500 5.500 12.500L8 13 1.500 7.500C.5 6 2 4.500 3.500 6L8 10" /></Icon>
                </RoundButton>
              </ViewControls>
            </Canvas>
            <RightRail>
              <RailTab aria-label="图纸页">
                <Icon w={28} h={24} sw={1.200}><path d="M6.500 18H1.500V1.500H24V5M5 5.500H27V22H5ZM15.500 14.500H27M15.500 14.500V22M15.500 18H27M21 14.500V18" /></Icon>
              </RailTab>
            </RightRail>
          </Workspace>
        </Main>
      </AppFrame>
      <ForumMark>UG爱好者论坛@b4585830</ForumMark>
    </Page>
  );
}
